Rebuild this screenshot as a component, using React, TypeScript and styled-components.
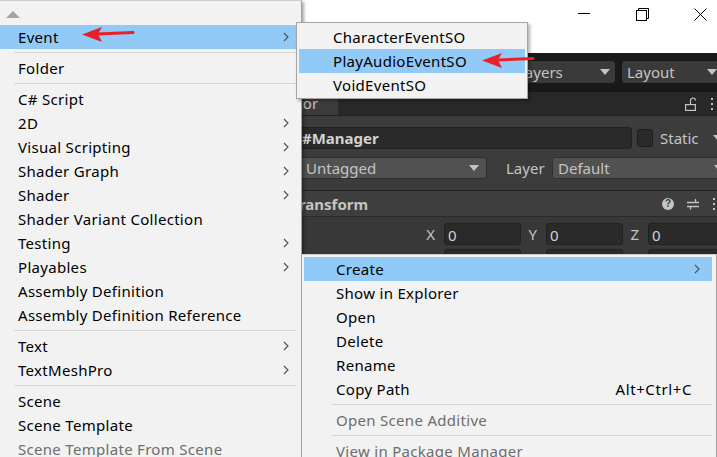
import React from "react";
import styled, { createGlobalStyle } from "styled-components";

const GlobalStyle = createGlobalStyle`
  html, body { margin: 0; padding: 0; background: #383838; }
  * { box-sizing: border-box; }
`;

const Screen = styled.div`
  position: relative;
  width: 717px;
  height: 457px;
  overflow: hidden;
  display: flex;
  flex-direction: column;
  font-family: "Noto Sans", "Liberation Sans", sans-serif;
`;

/* ---------- window title bar ---------- */
const TitleBar = styled.div`
  height: 53px;
  flex: 0 0 53px;
  background: #ffffff;
  display: flex;
  justify-content: flex-end;
  align-items: flex-start;
`;
const WinControls = styled.div`
  display: flex;
  margin-right: -12px;
`;
const WinButton = styled.div`
  width: 58px;
  height: 28px;
  display: flex;
  align-items: center;
  justify-content: center;
`;

/* ---------- editor ---------- */
const Editor = styled.div`
  flex: 1;
  display: flex;
  flex-direction: column;
  background: #383838;
  color: #c4c4c4;
  font-size: 15px;
  min-height: 0;
`;
const Toolbar = styled.div`
  height: 39px;
  flex: 0 0 39px;
  background: #191919;
  display: flex;
  align-items: flex-start;
  padding: 8px 0 0 512px;
  gap: 7px;
  overflow: hidden;
`;
const ToolDrop = styled.div<{ $w: number }>`
  width: ${(p) => p.$w}px;
  flex: 0 0 ${(p) => p.$w}px;
  height: 22px;
  background: #3a3a3a;
  border-radius: 3px;
  display: flex;
  align-items: center;
  justify-content: space-between;
  padding: 0 5px 0 5px;
  line-height: 22px;
  color: #c4c4c4;
`;
const DownTri = styled.span<{ $c?: string }>`
  width: 0;
  height: 0;
  border-left: 5px solid transparent;
  border-right: 5px solid transparent;
  border-top: 6px solid ${(p) => p.$c || "#c4c4c4"};
  flex: 0 0 auto;
`;
const Panels = styled.div`
  flex: 1;
  display: flex;
  min-width: 0;
`;
const Hierarchy = styled.div`
  width: 200px;
  flex: 0 0 200px;
  background: #383838;
`;
const Inspector = styled.div`
  flex: 1;
  min-width: 0;
  overflow: hidden;
  display: flex;
  flex-direction: column;
  background: #383838;
`;
const TabBar = styled.div`
  height: 24px;
  flex: 0 0 24px;
  background: #282828;
  display: flex;
  align-items: stretch;
  border-bottom: 1px solid #232323;
`;
const Tab = styled.div`
  width: 138px;
  background: #3c3c3c;
  padding-left: 51px;
  line-height: 23px;
  color: #c4c4c4;
`;
const TabTools = styled.div`
  margin-left: auto;
  display: flex;
  align-items: center;
  gap: 14px;
  padding-right: 3px;
`;
const GOHeader = styled.div`
  background: #3c3c3c;
  padding: 11px 0 11px 0;
  display: flex;
  flex-direction: column;
  gap: 8px;
  border-bottom: 1px solid #232323;
`;
const HeaderRow = styled.div<{ $pad: number }>`
  display: flex;
  align-items: center;
  height: 22px;
  padding-left: ${(p) => p.$pad}px;
`;
const NameField = styled.div`
  width: 336px;
  flex: 0 0 336px;
  height: 22px;
  background: #2a2a2a;
  border: 1px solid #212121;
  border-radius: 3px;
  padding-left: 5px;
  line-height: 20px;
  font-weight: 700;
  color: #d2d2d2;
`;
const CheckBox = styled.div`
  width: 16px;
  flex: 0 0 16px;
  height: 18px;
  margin-left: 5px;
  background: #2a2a2a;
  border: 1px solid #1e1e1e;
  border-radius: 3px;
`;
const InlineLabel = styled.span<{ $w?: number; $ml?: number }>`
  ${(p) => (p.$w ? `width: ${p.$w}px; flex: 0 0 ${p.$w}px;` : "flex: 0 0 auto;")}
  margin-left: ${(p) => p.$ml || 0}px;
  color: #c4c4c4;
  white-space: nowrap;
  display: flex;
  align-items: center;
`;
const Popup = styled.div<{ $w: number }>`
  width: ${(p) => p.$w}px;
  flex: 0 0 ${(p) => p.$w}px;
  height: 22px;
  background: #515151;
  border: 1px solid #303030;
  border-radius: 3px;
  display: flex;
  align-items: center;
  justify-content: space-between;
  padding: 0 7px 0 5px;
  color: #c4c4c4;
`;
const CompHeader = styled.div`
  height: 26px;
  flex: 0 0 26px;
  background: #3e3e3e;
  border-bottom: 1px solid #2a2a2a;
  display: flex;
  align-items: center;
  padding-left: 91px;
  font-weight: 700;
  color: #c4c4c4;
`;
const CompTools = styled.div`
  margin-left: auto;
  display: flex;
  align-items: center;
  gap: 13px;
  padding-right: 1px;
`;
const HelpIcon = styled.span`
  width: 12px;
  height: 12px;
  border-radius: 50%;
  background: #c4c4c4;
  color: #3e3e3e;
  font-size: 10px;
  font-weight: 700;
  line-height: 12px;
  text-align: center;
  font-family: "Liberation Sans", sans-serif;
`;
const VecRows = styled.div`
  display: flex;
  flex-direction: column;
  gap: 4px;
  padding-top: 6px;
`;
const VecRow = styled.div`
  display: flex;
  height: 22px;
  align-items: center;
`;
const PropLabel = styled.div`
  width: 219px;
  flex: 0 0 219px;
  padding-left: 18px;
  color: #c4c4c4;
`;
const AxisLabel = styled.div`
  width: 25px;
  flex: 0 0 25px;
  text-align: right;
  padding-right: 9px;
  color: #c4c4c4;
`;
const NumField = styled.div`
  width: 77px;
  flex: 0 0 77px;
  height: 22px;
  background: #2a2a2a;
  border: 1px solid #212121;
  border-radius: 3px;
  padding-left: 3px;
  line-height: 22px;
  color: #d2d2d2;
`;

/* ---------- menus ---------- */
const MenuBase = styled.div`
  position: absolute;
  background: #f2f2f2;
  color: #000;
  font-family: "Noto Sans", "Liberation Sans", sans-serif;
  font-size: 15px;
  letter-spacing: 0.3px;
  display: flex;
  flex-direction: column;
`;
const MainMenu = styled(MenuBase)`
  left: 0;
  top: 0;
  width: 302px;
  height: 470px;
  border-top: 1px solid #cdcdcd;
  border-right: 1px solid #a0a0a0;
  padding-right: 5px;
  box-shadow: 2px 2px 3px rgba(0, 0, 0, 0.35);
  z-index: 2;
`;
const ScrollUp = styled.div`
  height: 24px;
  flex: 0 0 24px;
  display: flex;
  align-items: center;
  padding-left: 6px;
`;
const UpTri = styled.span`
  width: 0;
  height: 0;
  border-left: 7px solid transparent;
  border-right: 7px solid transparent;
  border-bottom: 7px solid #a3a3a3;
  margin-top: 3px;
`;
const SubMenu = styled(MenuBase)`
  left: 296px;
  top: 22px;
  width: 232px;
  border: 1px solid #a5a5a5;
  padding: 2px 2px 1px 2px;
  box-shadow: 2px 2px 3px rgba(0, 0, 0, 0.3);
  z-index: 3;
`;
const ContextMenu = styled(MenuBase)`
  left: 301px;
  top: 254px;
  width: 416px;
  height: 220px;
  border-top: 1px solid #cdcdcd;
  border-left: 1px solid #a0a0a0;
  border-right: 1px solid #a0a0a0;
  padding: 2px 4px 0 2px;
  z-index: 2;
`;
const Item = styled.div<{ $pad: number; $hl?: boolean; $off?: boolean }>`
  height: 24px;
  flex: 0 0 24px;
  display: flex;
  align-items: center;
  padding-left: ${(p) => p.$pad}px;
  background: ${(p) => (p.$hl ? "#91c9f7" : "transparent")};
  color: ${(p) => (p.$off ? "#6d6d6d" : "#000")};
  white-space: nowrap;
  line-height: 24px;
`;
const ItemLabel = styled.span`
  flex: 1;
`;
const Shortcut = styled.span`
  flex: 0 0 auto;
  letter-spacing: 0.6px;
`;
const ArrowCell = styled.span<{ $w: number; $pl: number }>`
  width: ${(p) => p.$w}px;
  flex: 0 0 ${(p) => p.$w}px;
  padding-left: ${(p) => p.$pl}px;
  display: flex;
  align-items: center;
`;
const Sep = styled.div<{ $ml: number }>`
  height: 7px;
  flex: 0 0 7px;
  display: flex;
  align-items: center;
  padding-left: ${(p) => p.$ml}px;
  &::after {
    content: "";
    display: block;
    flex: 1;
    height: 1px;
    background: #d5d5d5;
  }
`;
const Annotation = styled.svg<{ $x: number; $y: number }>`
  position: absolute;
  left: ${(p) => p.$x}px;
  top: ${(p) => p.$y}px;
  z-index: 5;
  overflow: visible;
`;

const Chevron = () => (
  <svg width="6" height="10" viewBox="0 0 6 10">
    <polyline points="1,1 5,5 1,9" fill="none" stroke="#505050" strokeWidth="1.1" />
  </svg>
);

const Kebab = () => (
  <svg width="4" height="14" viewBox="0 0 4 14">
    <rect x="1" y="1" width="2" height="2" fill="#c4c4c4" />
    <rect x="1" y="6" width="2" height="2" fill="#c4c4c4" />
    <rect x="1" y="11" width="2" height="2" fill="#c4c4c4" />
  </svg>
);

const RedArrow = ({ x, y }: { x: number; y: number }) => (
  <Annotation $x={x} $y={y} width="56" height="22" viewBox="0 0 56 22">
    <line x1="16" y1="10" x2="52" y2="8.5" stroke="#e8202a" strokeWidth="3" strokeLinecap="round" />
    <polygon points="1,10.5 21,3 17,10 21,18" fill="#e8202a" />
  </Annotation>
);

type MI = { t: string; sub?: boolean; off?: boolean; hl?: boolean; sc?: string } | "sep";

const mainItems: MI[] = [
  { t: "Event", sub: true, hl: true },
  "sep",
  { t: "Folder" },
  "sep",
  { t: "C# Script" },
  { t: "2D", sub: true },
  { t: "Visual Scripting", sub: true },
  { t: "Shader Graph", sub: true },
  { t: "Shader", sub: true },
  { t: "Shader Variant Collection" },
  { t: "Testing", sub: true },
  { t: "Playables", sub: true },
  { t: "Assembly Definition" },
  { t: "Assembly Definition Reference" },
  "sep",
  { t: "Text", sub: true },
  { t: "TextMeshPro", sub: true },
  "sep",
  { t: "Scene" },
  { t: "Scene Template" },
  { t: "Scene Template From Scene", off: true },
];

const subItems: MI[] = [
  { t: "CharacterEventSO" },
  { t: "PlayAudioEventSO", hl: true },
  { t: "VoidEventSO" },
];

const ctxItems: MI[] = [
  { t: "Create", sub: true, hl: true },
  { t: "Show in Explorer" },
  { t: "Open" },
  { t: "Delete" },
  { t: "Rename" },
  { t: "Copy Path", sc: "Alt+Ctrl+C" },
  "sep",
  { t: "Open Scene Additive", off: true },
  "sep",
  { t: "View in Package Manager", off: true },
];

export default function App() {
  return (
    <>
      <GlobalStyle />
      <Screen>
        <TitleBar>
          <WinControls>
            <WinButton>
              <svg width="12" height="2" viewBox="0 0 12 2">
                <line x1="0" y1="0.5" x2="12" y2="0.5" stroke="#000" strokeWidth="1" />
              </svg>
            </WinButton>
            <WinButton>
              <svg width="13" height="13" viewBox="0 0 13 13">
                <rect x="0.5" y="2.5" width="10" height="10" fill="none" stroke="#000" strokeWidth="1" />
                <path d="M2.5 2.5V0.5H12.5V10.5H10.5" fill="none" stroke="#000" strokeWidth="1" />
              </svg>
            </WinButton>
            <WinButton>
              <svg width="13" height="13" viewBox="0 0 13 13">
                <path d="M0.5 0.5L12.5 12.5M12.5 0.5L0.5 12.5" stroke="#000" strokeWidth="1" />
              </svg>
            </WinButton>
          </WinControls>
        </TitleBar>
        <Editor>
          <Toolbar>
            <ToolDrop $w={103}>
              Layers
              <DownTri />
            </ToolDrop>
            <ToolDrop $w={100}>
              Layout
              <DownTri />
            </ToolDrop>
          </Toolbar>
          <Panels>
            <Hierarchy />
            <Inspector>
              <TabBar>
                <Tab>Inspector</Tab>
                <TabTools>
                  <svg width="11" height="14" viewBox="0 0 11 14">
                    <path d="M5.5 7V3.5a2.5 2.5 0 0 1 5 0" fill="none" stroke="#c4c4c4" strokeWidth="1.2" />
                    <rect x="0.6" y="7.6" width="9.8" height="5.8" fill="none" stroke="#c4c4c4" strokeWidth="1.2" />
                  </svg>
                  <Kebab />
                </TabTools>
              </TabBar>
              <GOHeader>
                <HeaderRow $pad={96}>
                  <NameField>#Manager</NameField>
                  <CheckBox />
                  <InlineLabel $ml={7}>Static</InlineLabel>
                  <InlineLabel $ml={14}>
                    <DownTri />
                  </InlineLabel>
                </HeaderRow>
                <HeaderRow $pad={60}>
                  <InlineLabel $w={40}>Tag</InlineLabel>
                  <Popup $w={187}>
                    Untagged
                    <DownTri />
                  </Popup>
                  <InlineLabel $ml={19} $w={46}>Layer</InlineLabel>
                  <Popup $w={180}>
                    Default
                    <DownTri />
                  </Popup>
                </HeaderRow>
              </GOHeader>
              <CompHeader>
                Transform
                <CompTools>
                  <HelpIcon>?</HelpIcon>
                  <svg width="12" height="12" viewBox="0 0 12 12">
                    <path d="M0 4.5H12M0 8.5H12M8.5 1V4.5M3.5 8.5V11.5" stroke="#c4c4c4" strokeWidth="1.3" />
                  </svg>
                  <Kebab />
                </CompTools>
              </CompHeader>
              <VecRows>
                {["Position", "Rotation"].map((label) => (
                  <VecRow key={label}>
                    <PropLabel>{label}</PropLabel>
                    {["X", "Y", "Z"].map((a) => (
                      <React.Fragment key={a}>
                        <AxisLabel>{a}</AxisLabel>
                        <NumField>0</NumField>
                      </React.Fragment>
                    ))}
                  </VecRow>
                ))}
              </VecRows>
            </Inspector>
          </Panels>
        </Editor>

        <MainMenu>
          <ScrollUp>
            <UpTri />
          </ScrollUp>
          {mainItems.map((it, i) =>
            it === "sep" ? (
              <Sep key={i} $ml={14} />
            ) : (
              <Item key={i} $pad={18} $hl={it.hl} $off={it.off}>
                <ItemLabel>{it.t}</ItemLabel>
                <ArrowCell $w={13} $pl={0}>
                  {it.sub ? <Chevron /> : null}
                </ArrowCell>
              </Item>
            )
          )}
        </MainMenu>

        <SubMenu>
          {subItems.map((it, i) =>
            it === "sep" ? null : (
              <Item key={i} $pad={34} $hl={it.hl}>
                <ItemLabel>{it.t}</ItemLabel>
              </Item>
            )
          )}
        </SubMenu>

        <ContextMenu>
          {ctxItems.map((it, i) =>
            it === "sep" ? (
              <Sep key={i} $ml={28} />
            ) : (
              <Item key={i} $pad={32} $hl={it.hl} $off={it.off}>
                <ItemLabel>{it.t}</ItemLabel>
                {it.sc ? <Shortcut>{it.sc}</Shortcut> : null}
                <ArrowCell $w={20} $pl={2}>
                  {it.sub ? <Chevron /> : null}
                </ArrowCell>
              </Item>
            )
          )}
        </ContextMenu>

        <RedArrow x={81} y={24} />
        <RedArrow x={481} y={50} />
      </Screen>
    </>
  );
}
